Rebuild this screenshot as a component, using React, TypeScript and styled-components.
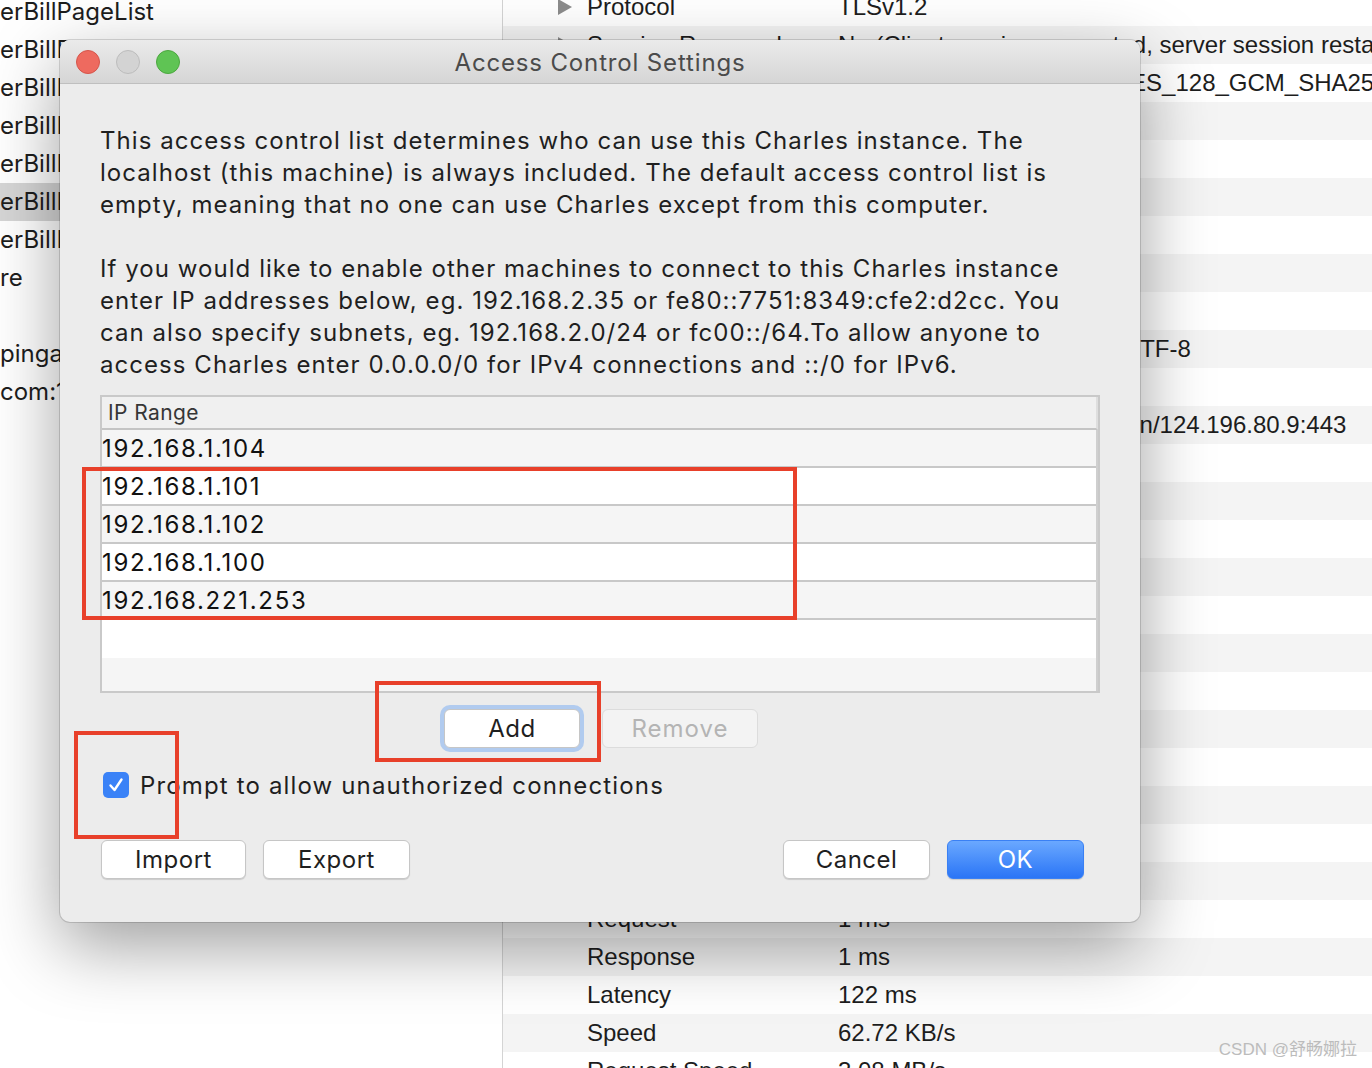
import React from "react"
import styled, { createGlobalStyle } from "styled-components"

const GlobalStyle = createGlobalStyle`
  html, body {
    margin: 0;
    padding: 0;
    overflow: hidden;
    background: #ffffff;
  }
  body {
    font-family: "Liberation Sans", Arial, sans-serif;
    color: #1d1d1d;
  }
`

const Screen = styled.div`
  position: relative;
  width: 1372px;
  height: 1068px;
  overflow: hidden;
  display: flex;
  background: #ffffff;
`

const TreePane = styled.div`
  width: 502px;
  flex-shrink: 0;
  border-right: 1px solid #d4d4d4;
  overflow: hidden;
`

const TreeList = styled.div`
  margin-top: -7px;
`

const TreeRow = styled.div<{ $selected?: boolean }>`
  height: 38px;
  line-height: 38px;
  font-family: Inter, "Liberation Sans", sans-serif;
  font-size: 24px;
  color: #1d1d1d;
  white-space: nowrap;
  background: ${p => (p.$selected ? "#d6d6d6" : "transparent")};
`

const DetailPane = styled.div`
  flex: 1;
  overflow: hidden;
`

const DetailList = styled.div`
  margin-top: -12px;
`

const DetailRow = styled.div<{ $odd: boolean }>`
  height: 38px;
  display: grid;
  grid-template-columns: 30px 251px 1fr;
  align-items: center;
  padding-left: 54px;
  font-size: 24px;
  white-space: nowrap;
  overflow: hidden;
  background: ${p => (p.$odd ? "#f4f4f4" : "#ffffff")};
`

const Cell = styled.span`
  overflow: visible;
`

const Dialog = styled.div`
  position: absolute;
  left: 60px;
  top: 40px;
  width: 1080px;
  height: 882px;
  border-radius: 10px;
  background: #ececec;
  box-shadow: 0 24px 70px rgba(0, 0, 0, 0.38), 0 0 0 1px rgba(0, 0, 0, 0.14);
  display: flex;
  flex-direction: column;
  overflow: hidden;
  font-family: Inter, "Liberation Sans", sans-serif;
  color: #1f1f1f;
`

const TitleBar = styled.div`
  position: relative;
  height: 43px;
  flex-shrink: 0;
  display: flex;
  align-items: center;
  justify-content: center;
  background: linear-gradient(#ebebeb, #d5d5d5);
  border-bottom: 1px solid #bfbfbf;
`

const Lights = styled.div`
  position: absolute;
  left: 16px;
  top: 10px;
  display: flex;
  gap: 16px;
`

const Light = styled.span<{ $fill: string; $edge: string }>`
  width: 24px;
  height: 24px;
  border-radius: 50%;
  box-sizing: border-box;
  background: ${p => p.$fill};
  border: 1px solid ${p => p.$edge};
`

const Title = styled.div`
  font-size: 24px;
  color: #4b4b4b;
  letter-spacing: 0.85px;
  padding-top: 2px;
`

const Body = styled.div`
  flex: 1;
  display: flex;
  flex-direction: column;
  padding: 41px 40px 0 40px;
`

const Para = styled.p`
  margin: 0 0 32px 0;
  font-size: 24px;
  line-height: 32px;
  white-space: nowrap;
  letter-spacing: 1.05px;
  &:last-of-type {
    margin-bottom: 14px;
  }
`

const Table = styled.div`
  width: 1000px;
  height: 298px;
  box-sizing: border-box;
  border: 2px solid #c9c9c9;
  display: flex;
  flex-direction: column;
  background: #f5f5f5;
`

const TableHead = styled.div`
  height: 31px;
  flex-shrink: 0;
  display: flex;
  align-items: center;
  padding-left: 6px;
  font-size: 21px;
  letter-spacing: 0.4px;
  color: #363636;
  background: #f0f0f0;
  border-bottom: 2px solid #c4c4c4;
  border-right: 2px solid #dedede;
`

const TableBody = styled.div`
  flex: 1;
  display: flex;
  flex-direction: column;
  border-right: 2px solid #cfcfcf;
`

const IpRow = styled.div<{ $odd: boolean }>`
  height: 36px;
  flex-shrink: 0;
  display: flex;
  align-items: center;
  font-size: 24px;
  letter-spacing: 1.7px;
  color: #111;
  background: ${p => (p.$odd ? "#f5f5f5" : "#ffffff")};
  border-bottom: 2px solid #c8c8c8;
`

const FillerRow = styled.div`
  height: 38px;
  flex-shrink: 0;
  background: #ffffff;
`

const ListButtons = styled.div`
  display: flex;
  justify-content: center;
  gap: 22px;
  margin-top: 16px;
  padding-left: 2px;
`

const Button = styled.button<{ $w: number; $focus?: boolean; $primary?: boolean }>`
  width: ${p => p.$w}px;
  height: 39px;
  box-sizing: border-box;
  border-radius: 6px;
  font-family: Inter, "Liberation Sans", sans-serif;
  font-size: 24px;
  letter-spacing: 0.5px;
  padding: 0;
  color: ${p => (p.$primary ? "#ffffff" : "#1f1f1f")};
  background: ${p => (p.$primary ? "linear-gradient(#6aa8ff, #2a75f6)" : "#ffffff")};
  border: 1px solid ${p => (p.$primary ? "#3a80f4" : "#c6c6c6")};
  box-shadow: ${p =>
    p.$focus
      ? "0 0 0 4px #b1cbef, 0 1px 1px rgba(0,0,0,0.2)"
      : "0 1px 1px rgba(0,0,0,0.14)"};
  &:disabled {
    background: #f3f3f3;
    border-color: #dcdcdc;
    color: #b4b4b4;
    box-shadow: none;
    letter-spacing: 1px;
  }
`

const CheckRow = styled.label`
  display: flex;
  align-items: center;
  gap: 11px;
  height: 32px;
  margin-top: 21px;
  padding-left: 3px;
  font-size: 24px;
  letter-spacing: 1.15px;
`

const CheckBox = styled.span`
  width: 26px;
  height: 26px;
  border-radius: 5px;
  background: #3a82f7;
  display: flex;
  align-items: center;
  justify-content: center;
`

const BottomRow = styled.div`
  display: flex;
  align-items: center;
  gap: 17px;
  margin-top: 39px;
  padding-left: 1px;
  padding-right: 16px;
`

const Spacer = styled.div`
  flex: 1;
`

const Mark = styled.div<{ $l: number; $t: number; $w: number; $h: number }>`
  position: absolute;
  left: ${p => p.$l}px;
  top: ${p => p.$t}px;
  width: ${p => p.$w}px;
  height: ${p => p.$h}px;
  box-sizing: border-box;
  border: 4px solid #e8402a;
  pointer-events: none;
`

const Watermark = styled.div`
  position: absolute;
  right: 15px;
  bottom: 8px;
  font-family: "Liberation Sans", "Noto Sans CJK SC", sans-serif;
  font-size: 17px;
  color: #bcbcbc;
`

const treeItems = [
  "erBillPageList",
  "erBillPageCount",
  "erBillList",
  "erBillInfo",
  "erBillItems",
  "erBillIndex",
  "erBillImport",
  "re",
  "",
  "pingan.com",
  "com:1443",
]

type Detail = [boolean, string, string]

const details: Detail[] = [
  [true, "Protocol", "TLSv1.2"],
  [true, "Session Resumed", "No (Client session requested, server session restarted)"],
  [true, "Cipher Suite", "TLS_ECDH_RSA_WITH_AES_128_GCM_SHA256"],
  [true, "ALPN", "-"],
  [true, "Client Certificates", "-"],
  [true, "Server Certificates", "3"],
  [true, "Extensions", ""],
  [false, "Method", "POST"],
  [false, "Kept Alive", "No"],
  [false, "Content-Type", "application/x-json;charset=UTF-8"],
  [false, "Client Address", "127.0.0.1:52043"],
  [false, "Remote Address", "stage-openapi.pingan.com.cn/124.196.80.9:443"],
  [false, "Tags", "-"],
  [false, "Connection", ""],
  [false, "WebSockets", "-"],
  [false, "Timing", ""],
  [false, "Request Start Time", "2022-03-08 10:21:33"],
  [false, "Request End Time", "2022-03-08 10:21:33"],
  [false, "Response Start Time", "2022-03-08 10:21:33"],
  [false, "Response End Time", "2022-03-08 10:21:33"],
  [false, "Duration", "124 ms"],
  [false, "DNS", "0 ms"],
  [false, "Connect", "0 ms"],
  [false, "TLS Handshake", "0 ms"],
  [false, "Request", "1 ms"],
  [false, "Response", "1 ms"],
  [false, "Latency", "122 ms"],
  [false, "Speed", "62.72 KB/s"],
  [false, "Request Speed", "3.08 MB/s"],
]

const ipRanges = ["192.168.1.104", "192.168.1.101", "192.168.1.102", "192.168.1.100", "192.168.221.253"]

const Arrow = () => (
  <svg width="15" height="16" viewBox="0 0 15 16">
    <polygon points="1,0 15,8 1,16" fill="#8c8c8c" />
  </svg>
)

const Check = () => (
  <svg width="18" height="18" viewBox="0 0 18 18">
    <path d="M3.5 9.5 L7.5 14 L14.5 3.5" fill="none" stroke="#ffffff" strokeWidth="2.4" strokeLinecap="round" strokeLinejoin="round" />
  </svg>
)

export default () => {
  return (
    <>
      <GlobalStyle />
      <Screen>
        <TreePane>
          <TreeList>
            {treeItems.map((t, i) => (
              <TreeRow key={i} $selected={i === 5}>
                {t}
              </TreeRow>
            ))}
          </TreeList>
        </TreePane>
        <DetailPane>
          <DetailList>
            {details.map(([arrow, k, v], i) => (
              <DetailRow key={k} $odd={i % 2 === 1}>
                <Cell>{arrow ? <Arrow /> : null}</Cell>
                <Cell>{k}</Cell>
                <Cell>{v}</Cell>
              </DetailRow>
            ))}
          </DetailList>
        </DetailPane>

        <Dialog>
          <TitleBar>
            <Lights>
              <Light $fill="#ee6a5f" $edge="#d5554b" />
              <Light $fill="#d3d3d3" $edge="#bcbcbc" />
              <Light $fill="#5fc454" $edge="#4ca73f" />
            </Lights>
            <Title>Access Control Settings</Title>
          </TitleBar>
          <Body>
            <Para>
              This access control list determines who can use this Charles instance. The
              <br />
              localhost (this machine) is always included. The default access control list is
              <br />
              empty, meaning that no one can use Charles except from this computer.
            </Para>
            <Para>
              If you would like to enable other machines to connect to this Charles instance
              <br />
              enter IP addresses below, eg. 192.168.2.35 or fe80::7751:8349:cfe2:d2cc. You
              <br />
              can also specify subnets, eg. 192.168.2.0/24 or fc00::/64.To allow anyone to
              <br />
              access Charles enter 0.0.0.0/0 for IPv4 connections and ::/0 for IPv6.
            </Para>
            <Table>
              <TableHead>IP Range</TableHead>
              <TableBody>
                {ipRanges.map((ip, i) => (
                  <IpRow key={ip} $odd={i % 2 === 0}>
                    {ip}
                  </IpRow>
                ))}
                <FillerRow />
              </TableBody>
            </Table>
            <ListButtons>
              <Button $w={136} $focus>
                Add
              </Button>
              <Button $w={156} disabled>
                Remove
              </Button>
            </ListButtons>
            <CheckRow>
              <CheckBox>
                <Check />
              </CheckBox>
              Prompt to allow unauthorized connections
            </CheckRow>
            <BottomRow>
              <Button $w={145}>Import</Button>
              <Button $w={147}>Export</Button>
              <Spacer />
              <Button $w={147}>Cancel</Button>
              <Button $w={137} $primary>
                OK
              </Button>
            </BottomRow>
          </Body>
        </Dialog>

        <Mark $l={82} $t={467} $w={715} $h={153} />
        <Mark $l={375} $t={681} $w={226} $h={81} />
        <Mark $l={74} $t={731} $w={105} $h={108} />

        <Watermark>CSDN @舒畅娜拉</Watermark>
      </Screen>
    </>
  )
}
